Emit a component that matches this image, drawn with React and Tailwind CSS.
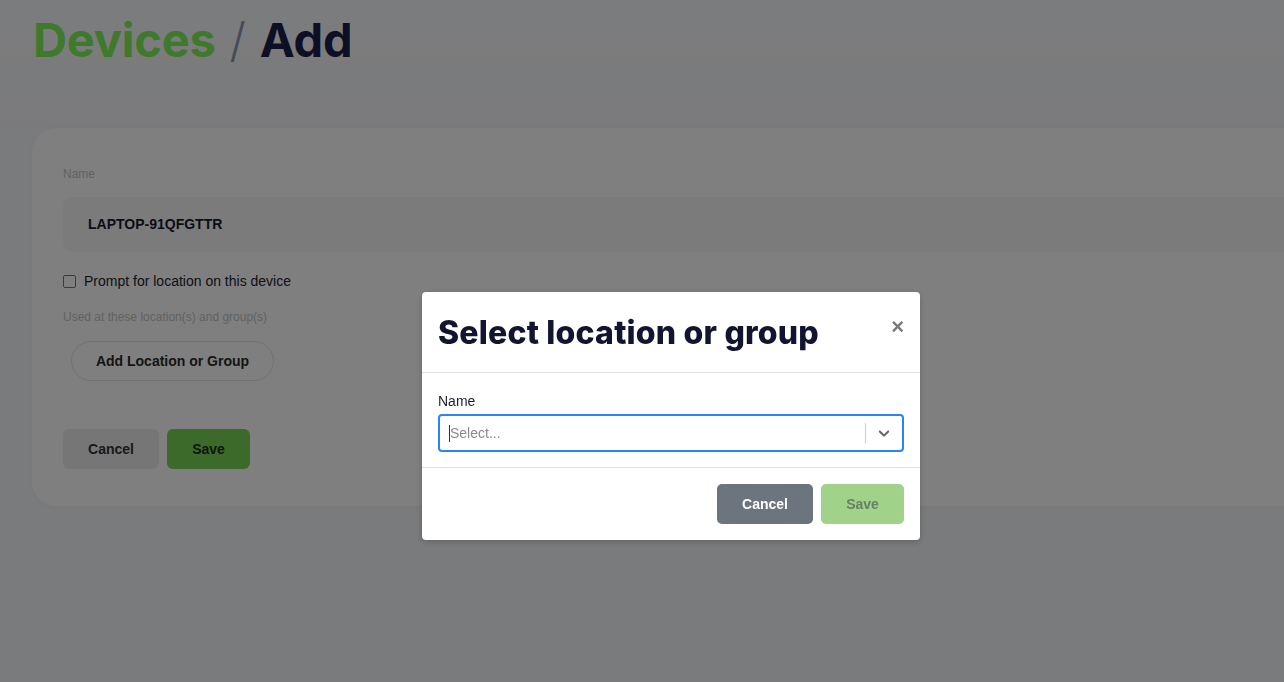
import React from 'react'

function App() {
  return (
    <div className="relative min-h-[682px] w-full overflow-hidden bg-[#f5f6f9] font-['Liberation_Sans',Arial,sans-serif]">
      <div className="bg-gradient-to-b from-[#f8f9fb] to-[#f4f5f8] pb-[60px] pt-[12px] pl-[33px]">
        <h1 className="flex items-center font-['Inter',sans-serif] text-[47px] font-bold tracking-[-0.2px] leading-[56px]">
          <span className="text-[#7ef458]">Devices</span>
          <span className="mx-[14px] font-light text-[#8f96ad]">/</span>
          <span className="text-[#1a1f48]">Add</span>
        </h1>
      </div>

      <div className="ml-[32px] -mr-[40px] rounded-[24px] bg-white px-[31px] pt-[37px] pb-[37px] shadow-[0_0_6px_rgba(0,0,0,0.03)]">
        <label className="block text-[12px] text-[#c4c4c4]">Name</label>
        <div className="mt-[14px] flex h-[55px] items-center rounded-[10px] bg-[#f6f6f6] pl-[25px] text-[14px] font-bold text-[#161a2e]">
          LAPTOP-91QFGTTR
        </div>
        <label className="mt-[19px] flex items-center gap-[8px] text-[14px] text-[#20232f]">
          <span className="h-[13px] w-[13px] rounded-[2px] border border-[#777] bg-white"></span>
          Prompt for location on this device
        </label>
        <div className="mt-[16px] text-[12px] text-[#c4c4c4]">Used at these location(s) and group(s)</div>
        <button className="ml-[8px] mt-[15px] h-[40px] w-[203px] rounded-full border border-[#e4e4e4] bg-white text-[14px] font-bold text-[#2a2a2a]">
          Add Location or Group
        </button>
        <div className="mt-[48px] flex gap-[8px]">
          <button className="h-[40px] w-[96px] rounded-[6px] bg-[#ececec] text-[14px] font-bold text-[#333]">Cancel</button>
          <button className="h-[40px] w-[83px] rounded-[6px] bg-[#78d454] text-[14px] font-bold text-[#222a20]">Save</button>
        </div>
      </div>

      <div className="fixed inset-0 bg-black/50 pl-[422px] pt-[292px]">
        <div className="w-[498px] rounded-[4px] bg-white shadow-[0_2px_6px_rgba(0,0,0,0.2)]">
          <div className="flex items-start justify-between border-b border-[#dee2e6] pl-[16px] pr-[16px] pt-[19px] pb-[18px]">
            <h2 className="font-['Inter',sans-serif] text-[32px] font-extrabold tracking-[0.2px] leading-[43px] text-[#121530]">Select location or group</h2>
            <button className="mt-[5px] text-[22px] font-bold leading-[22px] text-[#7a7a7a]">×</button>
          </div>
          <div className="border-b border-[#dee2e6] px-[16px] pt-[20px] pb-[15px]">
            <label className="block text-[14px] leading-[16px] text-[#1b1e33]">Name</label>
            <div className="mt-[5px] flex h-[38px] items-center rounded-[4px] border-2 border-[#2684ff] pl-[9px]">
              <span className="h-[17px] w-px bg-[#333]"></span>
              <span className="flex-1 text-[14px] text-[#8a8a8a]">Select...</span>
              <span className="h-[20px] w-px bg-[#cccccc]"></span>
              <span className="flex w-[36px] items-center justify-center text-[#666]">
                <svg width="18" height="18" viewBox="0 0 20 20" fill="currentColor">
                  <path d="M4.516 7.548c0.436-0.446 1.043-0.481 1.576 0l3.908 3.747 3.908-3.747c0.533-0.481 1.141-0.446 1.574 0 0.436 0.445 0.408 1.197 0 1.615-0.406 0.418-4.695 4.502-4.695 4.502-0.217 0.223-0.502 0.335-0.787 0.335s-0.570-0.112-0.789-0.335c0 0-4.287-4.084-4.695-4.502s-0.436-1.17 0-1.615z" />
                </svg>
              </span>
            </div>
          </div>
          <div className="flex justify-end gap-[8px] px-[16px] pt-[16px] pb-[16px]">
            <button className="h-[40px] w-[96px] rounded-[5px] bg-[#6c757d] text-[14px] font-bold text-white">Cancel</button>
            <button className="h-[40px] w-[83px] rounded-[5px] bg-[#a0d28a] text-[14px] font-bold text-[#6b7d66]">Save</button>
          </div>
        </div>
      </div>
    </div>
  )
}

export default App
